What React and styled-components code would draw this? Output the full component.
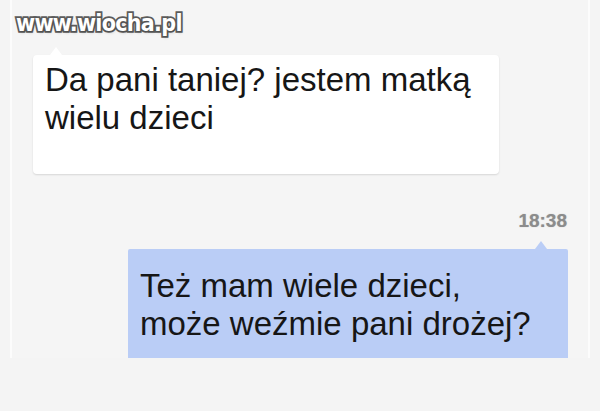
import React from 'react'
import styled, { createGlobalStyle } from 'styled-components'

const GlobalStyle = createGlobalStyle`
  html, body {
    margin: 0;
    padding: 0;
    background: #f4f4f4;
  }
`

const Page = styled.div`
  position: relative;
  width: 600px;
  height: 411px;
  overflow: hidden;
  background: #f4f4f4;
  font-family: "Liberation Sans", Arial, sans-serif;
`

const Panel = styled.div`
  display: flex;
  flex-direction: column;
  margin: 0 10px;
  height: 358px;
  overflow: hidden;
  background: #f5f5f5;
  border-left: 2px solid #fcfcfc;
  border-right: 2px solid #fcfcfc;
  box-sizing: border-box;
`

const Watermark = styled.span`
  position: absolute;
  left: 16px;
  top: 10px;
  font-family: "DejaVu Sans Condensed", "DejaVu Sans", sans-serif;
  font-stretch: condensed;
  font-weight: bold;
  font-size: 23px;
  letter-spacing: -0.7px;
  color: #ffffff;
  -webkit-text-stroke: 3.5px #5c5c5c;
  paint-order: stroke fill;
  text-shadow: 1px 2px 3px rgba(0, 0, 0, 0.16);
`

const Bubble = styled.div`
  position: relative;
  box-sizing: border-box;
  width: ${p => p.$width}px;
  font-size: 33px;
  line-height: 38px;
  color: #161616;
  background: ${p => (p.$out ? '#bacdf6' : '#ffffff')};
  border-radius: ${p => (p.$out ? '2px' : '4px')};
  box-shadow: ${p => (p.$out ? 'none' : '0 1px 2px rgba(0, 0, 0, 0.13)')};

  &::before {
    content: '';
    position: absolute;
    top: -8px;
    ${p => (p.$out ? 'right: 21px;' : 'left: 17px;')}
    border-left: 6px solid transparent;
    border-right: 6px solid transparent;
    border-bottom: 8px solid ${p => (p.$out ? '#bacdf6' : '#ffffff')};
  }
`

const InBubble = styled(Bubble)`
  margin: 55px 0 0 21px;
  padding: 6px 12px 37px 12px;
`

const OutBubble = styled(Bubble)`
  align-self: flex-end;
  margin: 18px 20px 0 0;
  padding: 18px 12px 30px 12px;
  flex-shrink: 0;
`

const Time = styled.div`
  align-self: flex-end;
  margin: 37px 21px 0 0;
  font-size: 19px;
  line-height: 20px;
  font-weight: bold;
  color: #8c8c8c;
  text-shadow: 0 0 1px rgba(120, 120, 120, 0.5);
`

export default function App() {
  return (
    <Page>
      <GlobalStyle />
      <Panel>
        <InBubble $width={466}>
          Da pani taniej? jestem matką
          <br />
          wielu dzieci
        </InBubble>
        <Time>18:38</Time>
        <OutBubble $out $width={440}>
          Też mam wiele dzieci,
          <br />
          może weźmie pani drożej?
        </OutBubble>
      </Panel>
      <Watermark>www.wiocha.pl</Watermark>
    </Page>
  )
}
